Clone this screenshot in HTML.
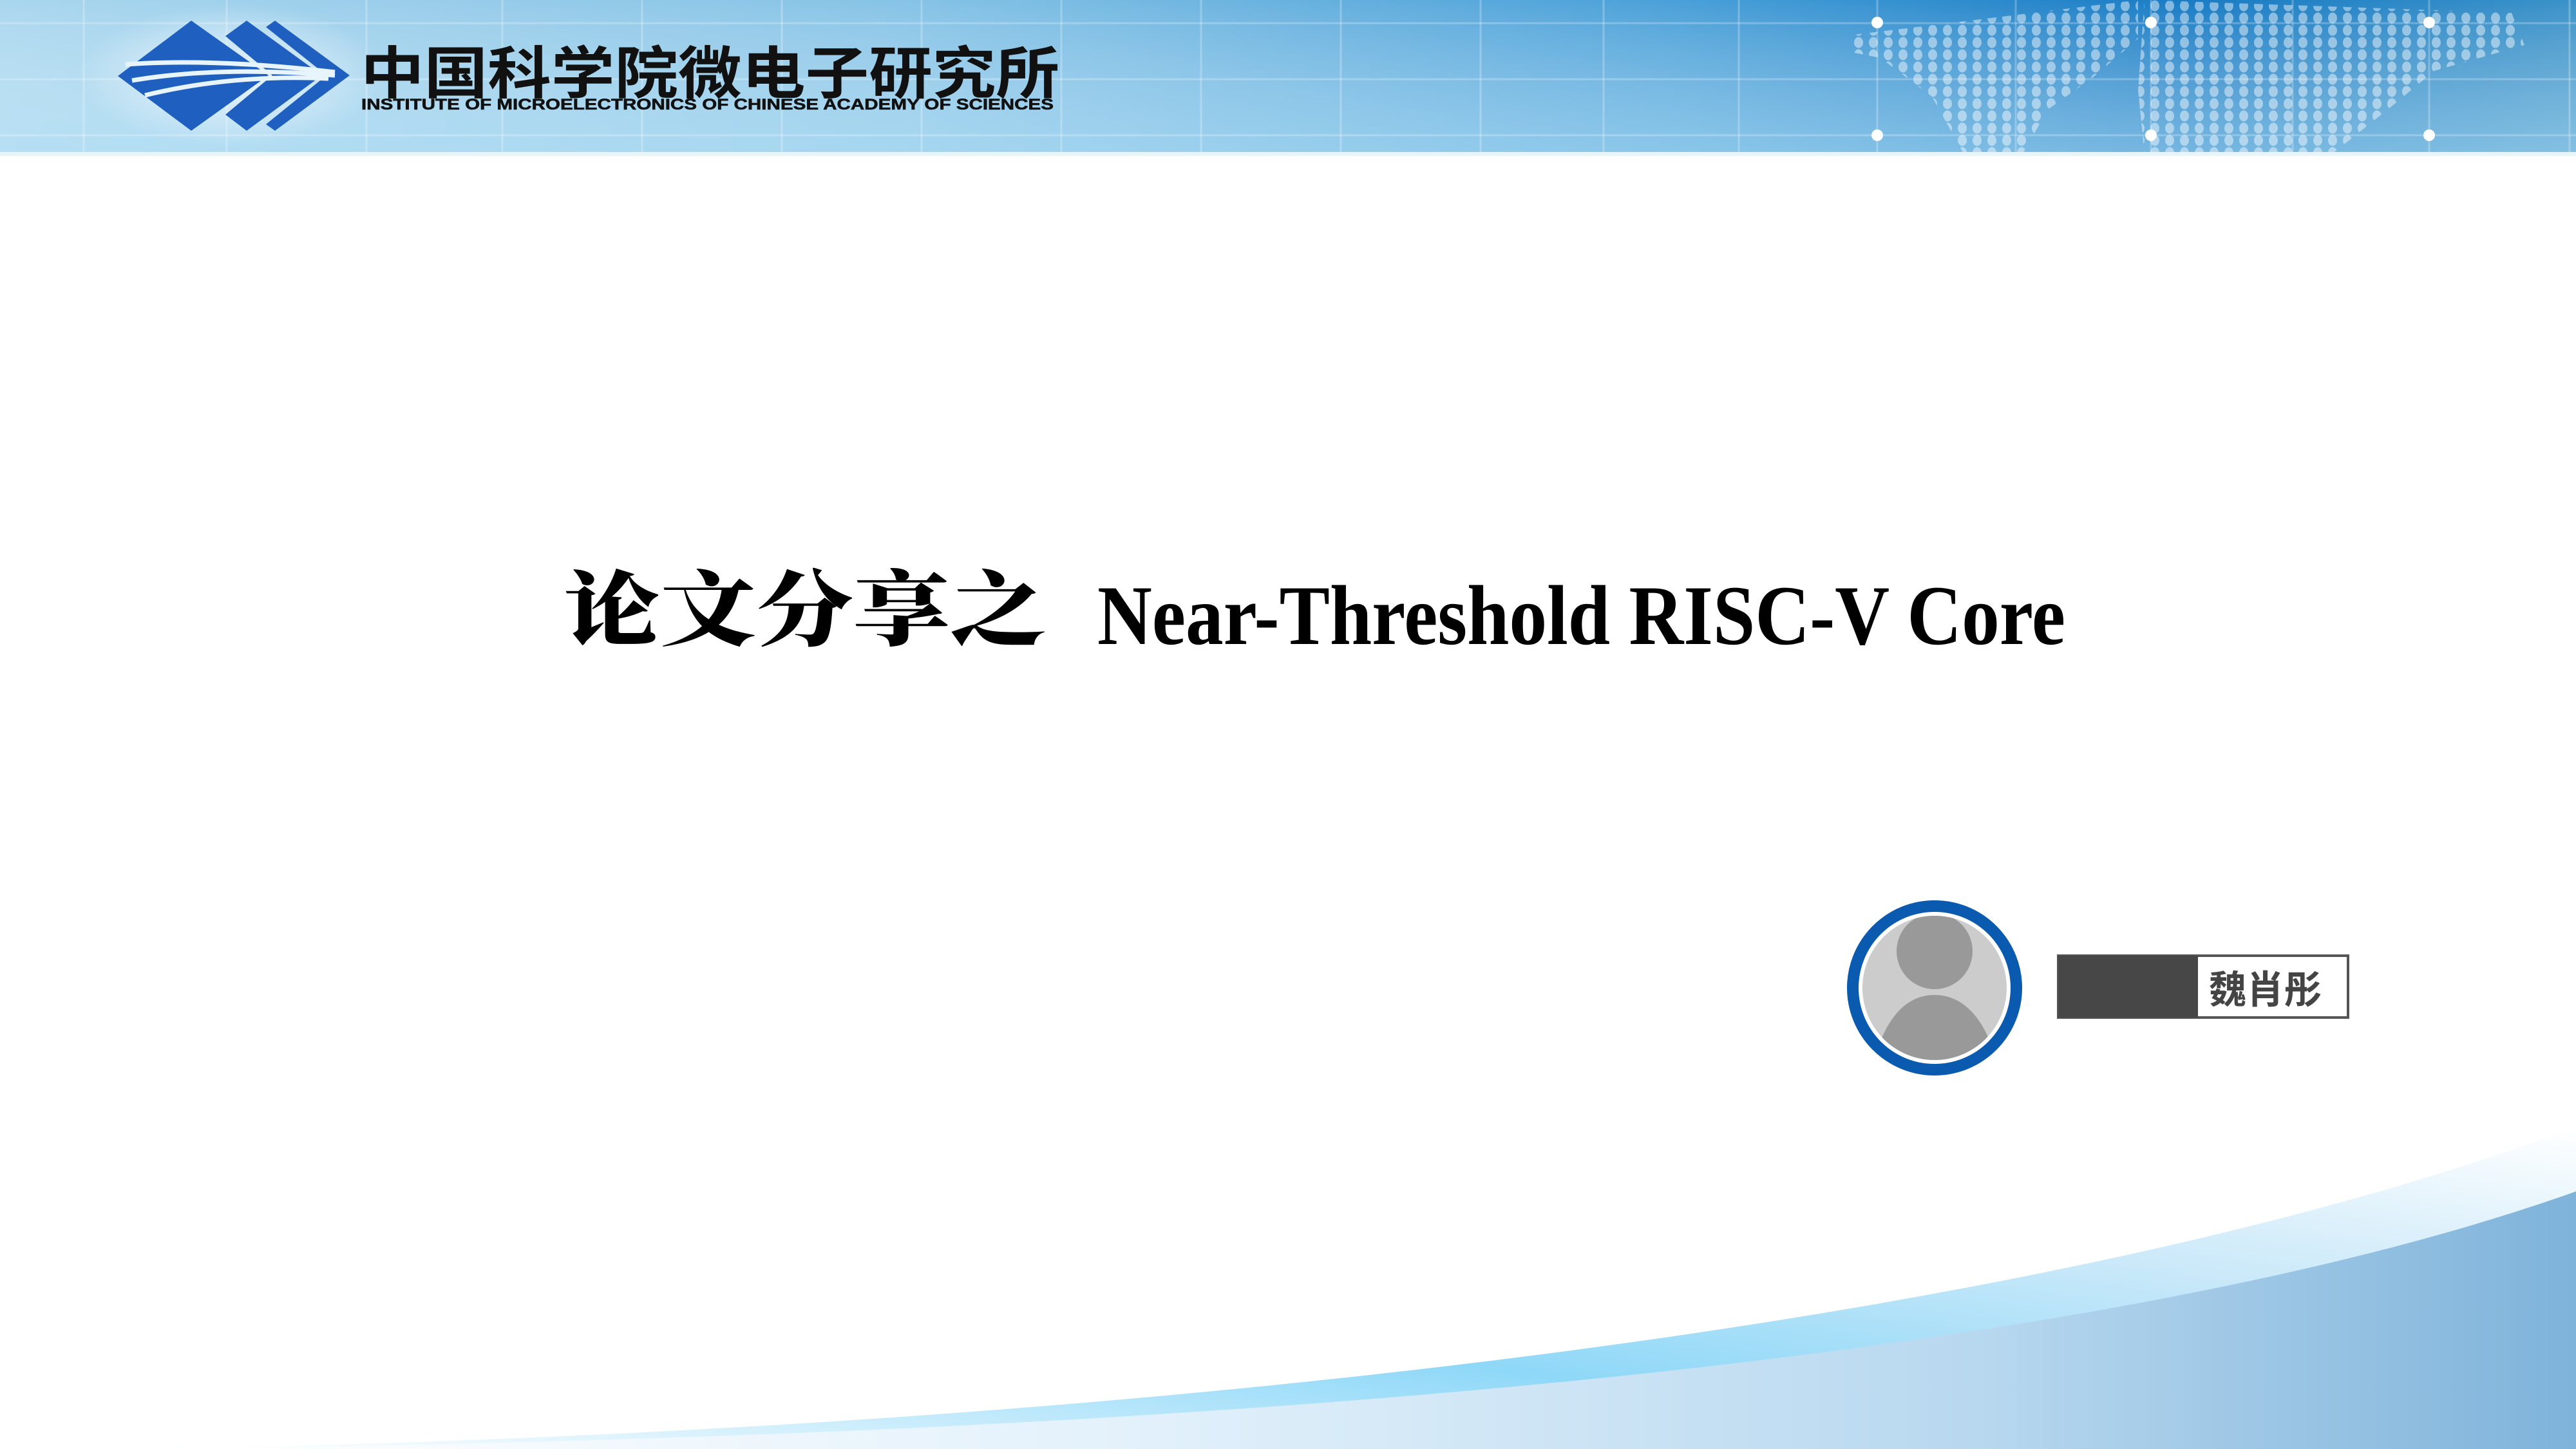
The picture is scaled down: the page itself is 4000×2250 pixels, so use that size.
<!DOCTYPE html>
<html><head><meta charset="utf-8"><style>
html,body{margin:0;padding:0;background:#fff;}
body{width:4000px;height:2250px;position:relative;overflow:hidden;}
svg{position:absolute;left:0;top:0;}
</style></head><body>
<svg width="4000" height="2250" viewBox="0 0 4000 2250" xmlns="http://www.w3.org/2000/svg">
<defs>
<linearGradient id="hdr" x1="0" y1="0" x2="1" y2="0">
<stop offset="0" stop-color="#a9d6ee"/><stop offset="0.35" stop-color="#86c3e6"/><stop offset="0.65" stop-color="#4aa0d8"/><stop offset="0.85" stop-color="#1a7cc4"/><stop offset="1" stop-color="#3b92c8"/>
</linearGradient>
<linearGradient id="hdrv" x1="0" y1="0" x2="0" y2="1">
<stop offset="0" stop-color="#ffffff" stop-opacity="0"/><stop offset="1" stop-color="#bfe6f8" stop-opacity="0.55"/>
</linearGradient>
<radialGradient id="glow" cx="0.5" cy="0.5" r="0.5">
<stop offset="0" stop-color="#ffffff" stop-opacity="0.75"/><stop offset="1" stop-color="#ffffff" stop-opacity="0"/>
</radialGradient>
<pattern id="dots" width="23" height="19" patternUnits="userSpaceOnUse">
<ellipse cx="11" cy="9" rx="7" ry="8.5" fill="#ffffff" fill-opacity="0.45"/>
</pattern>
<clipPath id="map">
<path d="M2870 55 L3320 0 L3320 60 L3250 120 L3180 170 L3140 240 L3050 240 L3000 150 L2920 90 L2870 80 Z"/>
<path d="M3330 0 L3900 20 L3920 70 L3780 110 L3720 160 L3620 240 L3330 240 L3320 140 Z"/>
</clipPath>
<linearGradient id="swfill" x1="0" y1="0" x2="1" y2="0">
<stop offset="0" stop-color="#ffffff"/><stop offset="0.4" stop-color="#e3f1fb"/><stop offset="0.75" stop-color="#b8d8ef"/><stop offset="1" stop-color="#7fb3da"/>
</linearGradient>
<linearGradient id="band" x1="0" y1="1" x2="1" y2="0">
<stop offset="0" stop-color="#ffffff"/><stop offset="0.4" stop-color="#8fd8f8"/><stop offset="0.7" stop-color="#cbe9f9"/><stop offset="1" stop-color="#ffffff"/>
</linearGradient>
<clipPath id="disc"><circle cx="3004" cy="1534" r="112"/></clipPath>
</defs>

<rect x="0" y="0" width="4000" height="240" fill="url(#hdr)"/>
<rect x="0" y="0" width="4000" height="240" fill="url(#hdrv)"/>
<g stroke="#ffffff" stroke-opacity="0.25" stroke-width="3">
<line x1="130" y1="0" x2="130" y2="240"/><line x1="352" y1="0" x2="352" y2="240"/><line x1="569" y1="0" x2="569" y2="240"/><line x1="780" y1="0" x2="780" y2="240"/><line x1="997" y1="0" x2="997" y2="240"/><line x1="1214" y1="0" x2="1214" y2="240"/><line x1="1431" y1="0" x2="1431" y2="240"/><line x1="1648" y1="0" x2="1648" y2="240"/><line x1="1865" y1="0" x2="1865" y2="240"/><line x1="2082" y1="0" x2="2082" y2="240"/><line x1="2299" y1="0" x2="2299" y2="240"/><line x1="2490" y1="0" x2="2490" y2="240"/><line x1="2700" y1="0" x2="2700" y2="240"/><line x1="2915" y1="0" x2="2915" y2="240"/><line x1="3130" y1="0" x2="3130" y2="240"/><line x1="3340" y1="0" x2="3340" y2="240"/><line x1="3560" y1="0" x2="3560" y2="240"/><line x1="3772" y1="0" x2="3772" y2="240"/><line x1="3990" y1="0" x2="3990" y2="240"/>
<line x1="0" y1="36" x2="4000" y2="36"/><line x1="0" y1="123" x2="4000" y2="123"/><line x1="0" y1="210" x2="4000" y2="210"/>
</g>
<rect x="2860" y="0" width="1080" height="240" fill="url(#dots)" clip-path="url(#map)"/>
<g fill="#fff"><circle cx="2915" cy="35" r="9"/><circle cx="3340" cy="35" r="9"/><circle cx="3772" cy="35" r="9"/><circle cx="2915" cy="210" r="9"/><circle cx="3340" cy="210" r="9"/><circle cx="3772" cy="210" r="9"/></g>
<rect x="0" y="236" width="4000" height="6" fill="#e6f4fb"/>

<ellipse cx="360" cy="118" rx="240" ry="110" fill="url(#glow)"/>
<g fill="#1f5fbf">
<polygon points="297,32 417,117 297,203 183,118"/>
<polygon points="383,32 500,117 383,203 350,178 423,117 350,56"/>
<polygon points="427,32 543,117 427,203 413,193 507,117 413,42"/>
</g>
<g fill="none" stroke="#e8f4fb" stroke-width="7">
<path d="M195 100 Q 330 90 520 112"/>
<path d="M205 125 Q 340 102 520 117"/>
<path d="M225 148 Q 360 115 510 122"/>
</g>
<text x="560" y="145" textLength="1085" lengthAdjust="spacingAndGlyphs" font-family="'Liberation Sans','Noto Sans CJK SC',sans-serif" font-weight="bold" font-size="88" fill="#111">中国科学院微电子研究所</text>
<text x="561" y="170" textLength="1075" lengthAdjust="spacingAndGlyphs" font-family="'Liberation Sans',sans-serif" font-weight="bold" font-size="24" fill="#111" stroke="#111" stroke-width="0.6">INSTITUTE OF MICROELECTRONICS OF CHINESE ACADEMY OF SCIENCES</text>

<path d="M255 2250 C 1800 2220 3200 2050 4000 1750 L4000 2250 Z" fill="url(#band)"/>
<path d="M255 2250 C 2000 2230 3300 2100 4000 1850 L4000 2250 Z" fill="url(#swfill)"/>

<text x="875" y="992" textLength="750" lengthAdjust="spacingAndGlyphs" font-family="'Liberation Serif','Noto Serif CJK SC',serif" font-weight="900" font-size="128" fill="#000">论文分享之</text>
<text x="1704" y="1000" textLength="1503" lengthAdjust="spacingAndGlyphs" font-family="'Liberation Serif',serif" font-weight="bold" font-size="132" fill="#000">Near-Threshold RISC-V Core</text>

<circle cx="3004" cy="1534" r="127" fill="#fff" stroke="#0a5bb0" stroke-width="18"/>
<circle cx="3004" cy="1534" r="112" fill="#cccccc"/>
<g clip-path="url(#disc)" fill="#999999">
<ellipse cx="3004" cy="1477" rx="59" ry="59"/>
<path d="M2912 1640 C 2930 1580 2960 1545 3004 1545 C 3048 1545 3080 1580 3098 1640 L3110 1660 L2900 1660 Z"/>
</g>

<rect x="3196" y="1484" width="450" height="96" fill="#fff" stroke="#555" stroke-width="4"/>
<rect x="3196" y="1484" width="217" height="96" fill="#474747"/>
<text x="3430" y="1558" textLength="175" lengthAdjust="spacingAndGlyphs" font-family="'Liberation Sans','Noto Sans CJK SC',sans-serif" font-weight="bold" font-size="60" fill="#444">魏肖彤</text>
</svg>
</body></html>
